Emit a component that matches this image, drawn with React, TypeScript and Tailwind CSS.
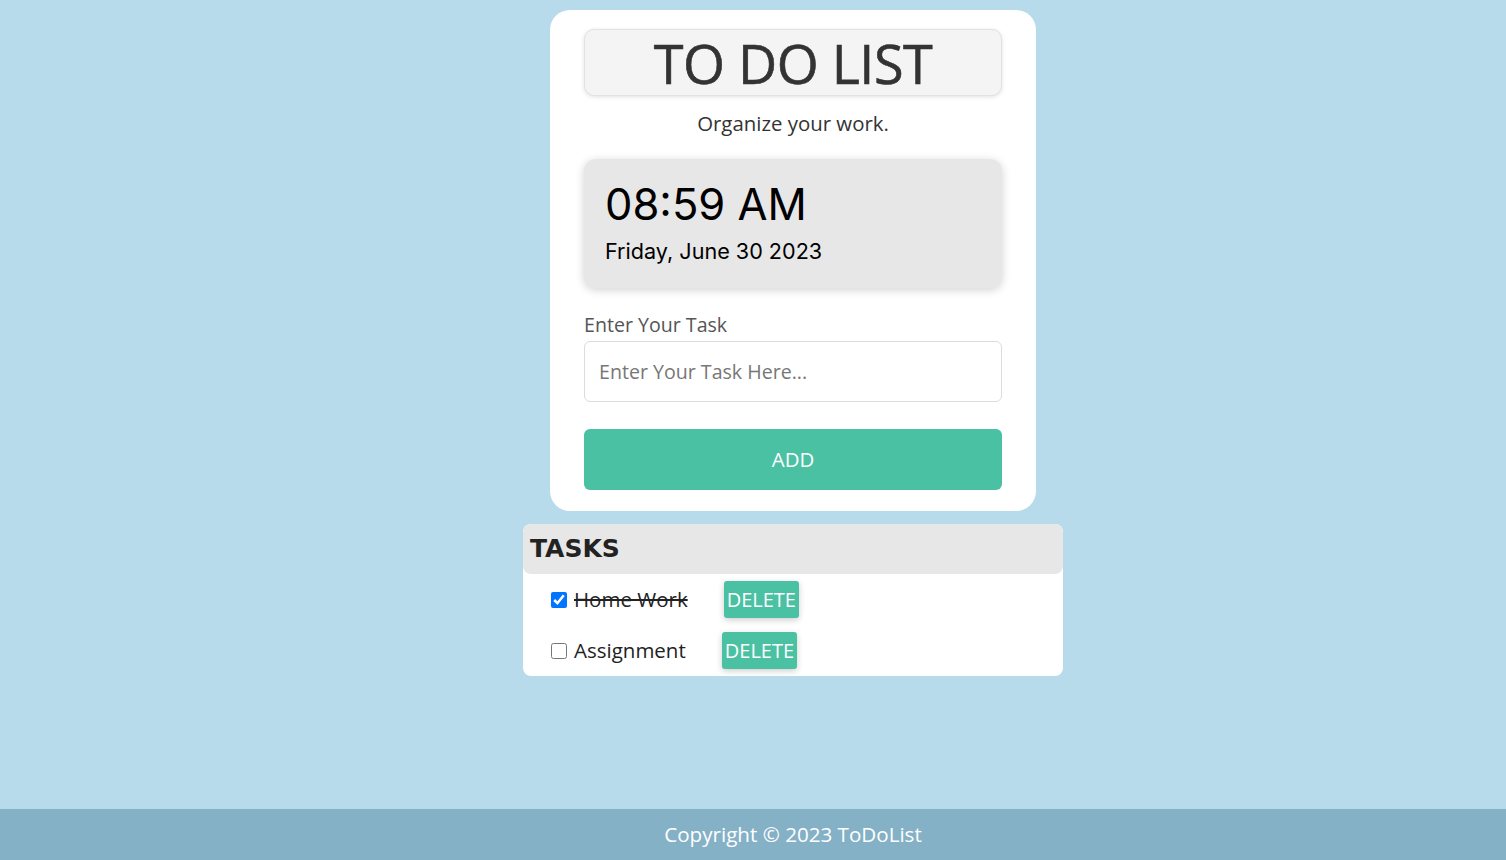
import React, { FC, useState } from 'react'

type Task = { id: number; text: string; done: boolean }

const App: FC = () => {
  const [tasks, setTasks] = useState<Task[]>([
    { id: 1, text: 'Home Work', done: true },
    { id: 2, text: 'Assignment', done: false },
  ])
  const [value, setValue] = useState('')

  const addTask = () => {
    if (!value.trim()) return
    setTasks([...tasks, { id: Date.now(), text: value, done: false }])
    setValue('')
  }

  return (
    <div className="min-h-screen flex flex-col bg-[#b7dbea] font-['Open_Sans',sans-serif]">
      <main className="flex-1 flex flex-col items-center pl-[80px] pt-[10px]">
        <div className="w-[486px] bg-white rounded-[20px] px-[34px] pt-[19px] pb-[21px]">
          <div className="h-[67px] flex items-center justify-center bg-[#f4f4f4] border border-[#e2e2e2] rounded-[10px] shadow-[0_1px_4px_rgba(0,0,0,0.12)]">
            <h1 className="text-[54px] leading-none font-medium text-[#333] tracking-[-0.5px] [-webkit-text-stroke:0.6px_#333]">TO DO LIST</h1>
          </div>
          <p className="text-center text-[20.4px] text-[#333] mt-[13px] leading-[28px]">Organize your work.</p>

          <div className="mt-[22px] h-[129px] bg-[#e7e7e7] rounded-[12px] shadow-[0_2px_10px_rgba(0,0,0,0.18)] px-[21px] pt-[20px] font-['Inter',sans-serif] text-black">
            <div className="text-[43.5px] leading-[50px]">08:59 AM</div>
            <div className="text-[21.6px] leading-[28px] mt-[8px]">Friday, June 30 2023</div>
          </div>

          <label className="block mt-[24px] text-[19.6px] leading-[26px] text-[#555]">Enter Your Task</label>
          <input
            type="text"
            value={value}
            onChange={(e) => setValue(e.target.value)}
            placeholder="Enter Your Task Here..."
            className="mt-[3px] w-full h-[61px] border border-[#dcdcdc] rounded-[6px] px-[14px] text-[19.6px] text-[#333] placeholder:text-[#777] outline-none"
          />
          <button
            onClick={addTask}
            className="mt-[27px] w-full h-[61px] rounded-[6px] bg-[#4ac1a3] text-white text-[20.4px]"
          >
            ADD
          </button>
        </div>

        <div className="mt-[13px] w-[540px] bg-white rounded-[8px] overflow-hidden">
          <div className="h-[50px] bg-[#e7e7e7] rounded-[8px] flex items-center px-[7px]">
            <h2 className="font-['DejaVu_Sans',sans-serif] font-bold text-[25px] text-[#222]">TASKS</h2>
          </div>
          <ul>
            {tasks.map((t) => (
              <li key={t.id} className="h-[51px] flex items-center pl-[28px]">
                <input
                  type="checkbox"
                  checked={t.done}
                  onChange={() => setTasks(tasks.map((x) => (x.id === t.id ? { ...x, done: !x.done } : x)))}
                  className="w-[16px] h-[16px] accent-[#0075ff] m-0"
                />
                <span className={`ml-[7px] text-[20.5px] text-[#222] ${t.done ? 'line-through' : ''}`}>{t.text}</span>
                <button
                  onClick={() => setTasks(tasks.filter((x) => x.id !== t.id))}
                  className="ml-[36px] h-[37px] px-[3px] rounded-[3px] bg-[#4ac1a3] text-white text-[20px] shadow-[0_2px_6px_rgba(0,0,0,0.2)]"
                >
                  DELETE
                </button>
              </li>
            ))}
          </ul>
        </div>
      </main>
      <footer className="h-[51px] bg-[#84b1c6] flex items-center justify-center pl-[80px] text-white text-[20.6px]">
        Copyright © 2023 ToDoList
      </footer>
    </div>
  )
}

export default App
